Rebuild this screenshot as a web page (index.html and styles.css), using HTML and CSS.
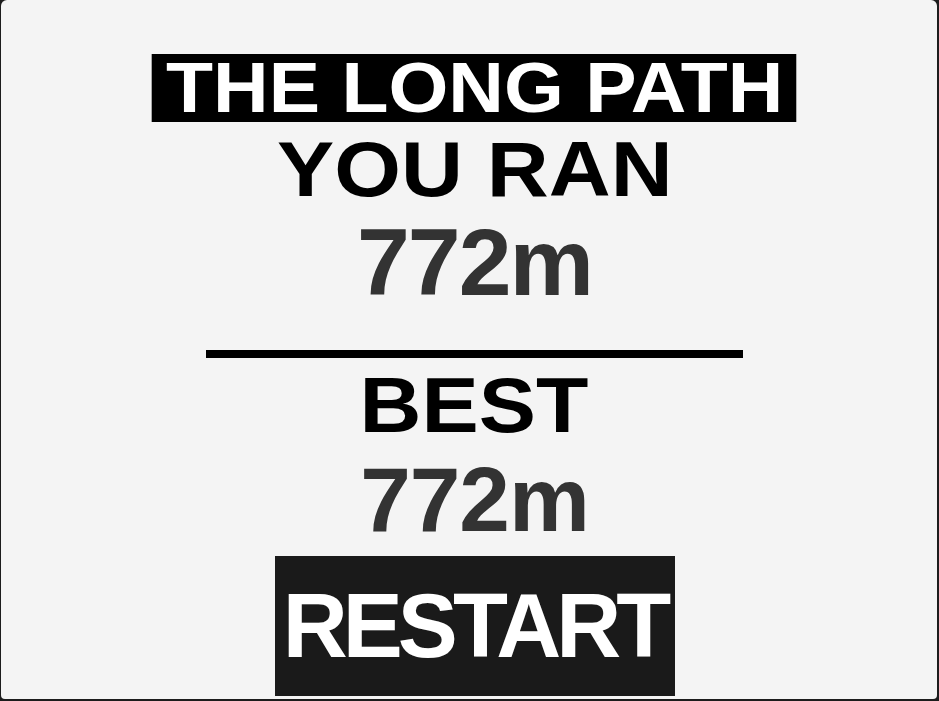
FILE: index.html
```html
<!DOCTYPE html>
<html lang="en">
<head>
    <meta charset="UTF-8">
    <meta name="viewport" content="width=device-width, initial-scale=1.0">
    <title>The Long Path - Game Over</title>
    <link rel="stylesheet" href="styles.css">
</head>
<body>
    <div class="screen">
        <div class="result">
            <h1 class="title">THE LONG PATH</h1>
            <h2 class="label">YOU RAN</h2>
            <p class="distance">772m</p>

            <div class="rule"></div>

            <h2 class="label">BEST</h2>
            <p class="distance distance-best">772m</p>

            <button class="restart" id="restartBtn">RESTART</button>
        </div>
    </div>
</body>
</html>
```

FILE: styles.css
```css
html, body {
    margin: 0;
    height: 100%;
}
body {
    background: #1c1c1c;
    font-family: 'Liberation Sans', Arial, sans-serif;
    font-weight: bold;
}
.screen {
    box-sizing: border-box;
    height: 699px;
    margin: 0 2px 0 1px;
    background: #f4f4f4;
    border-radius: 6px 6px 4px 4px;
    padding-left: 11px;
    overflow: hidden;
}
.result {
    display: flex;
    flex-direction: column;
    align-items: center;
    padding-top: 54px;
}
/* headings are drawn a little wider than the font */
.title,
.label {
    transform: scaleX(1.1);
}
.title {
    margin: 0;
    padding: 0 12px 0 13px;
    background: #000;
    color: #fff;
    font-size: 70px;
    line-height: 68px;
}
.label {
    margin: 0;
    color: #000;
    font-size: 78px;
    line-height: 94px;
}
.distance {
    margin: 0;
    color: #333;
    font-size: 95px;
    line-height: 92px;
    letter-spacing: -2px;
}
.distance-best {
    font-size: 91px;
    line-height: 95px;
    letter-spacing: -1px;
}
.rule {
    width: 537px;
    height: 8px;
    margin-top: 42px;
    background: #000;
}
.restart {
    margin-top: 9px;
    width: 400px;
    height: 140px;
    padding: 0;
    border: none;
    background: #1a1a1a;
    color: #fff;
    font-family: inherit;
    font-weight: bold;
    font-size: 90px;
    letter-spacing: -5px;
    cursor: pointer;
}
```
